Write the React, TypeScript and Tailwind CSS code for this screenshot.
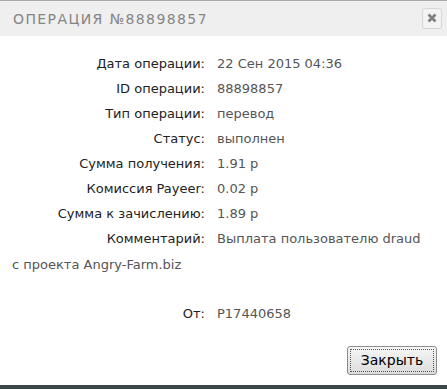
import React from "react";

const rows: [string, string][] = [
  ["Дата операции:", "22 Сен 2015 04:36"],
  ["ID операции:", "88898857"],
  ["Тип операции:", "перевод"],
  ["Статус:", "выполнен"],
  ["Сумма получения:", "1.91 р"],
  ["Комиссия Payeer:", "0.02 р"],
  ["Сумма к зачислению:", "1.89 р"],
];

export default function App() {
  return (
    <div
      className="w-[447px] h-[389px] bg-white flex flex-col overflow-hidden"
      style={{ fontFamily: '"DejaVu Sans", "Open Sans", sans-serif' }}
    >
      <div className="h-[36px] shrink-0 border-t border-[#a9a9a9] bg-[#efefef] flex items-center justify-between pl-[13px] pr-[5px]">
        <div className="text-[14px] tracking-[1.4px] text-[#858585] leading-none">ОПЕРАЦИЯ №88898857</div>
        <div className="w-[20px] h-[21px] border border-[#d6d6d6] rounded-[3px] bg-[#f3f3f3] flex items-center justify-center mb-[1px]">
          <svg width="10" height="10" viewBox="0 0 10 10">
            <path d="M1.5 1.5 L8.5 8.5 M8.5 1.5 L1.5 8.5" stroke="#808080" strokeWidth="2.8" strokeLinecap="butt" />
          </svg>
        </div>
      </div>
      <div className="flex-1 flex flex-col pt-[15px] text-[13px] leading-[25px]">
        {rows.map(([l, v]) => (
          <div key={l} className="flex">
            <div className="w-[205px] text-right text-[#222] font-medium">{l}</div>
            <div className="pl-[12px] text-[#555]">{v}</div>
          </div>
        ))}
        <div className="pl-[12px] leading-[26px]">
          <span className="inline-block w-[193px] text-right text-[#222] font-medium">Комментарий:</span>
          <span className="pl-[12px] text-[#555]">Выплата пользователю draud</span>
          <br />
          <span className="text-[#555]">с проекта Angry-Farm.biz</span>
        </div>
        <div className="flex mt-[23px]">
          <div className="w-[205px] text-right text-[#222] font-medium">От:</div>
          <div className="pl-[12px] text-[#555]">P17440658</div>
        </div>
        <div className="flex-1" />
        <div className="flex justify-end pr-[10px] pb-[10px]">
          <button className="w-[90px] h-[29px] rounded-[3px] border border-[#8d8d8d] bg-gradient-to-b from-[#f6f6f6] to-[#dcdcdc] p-[2px]">
            <div className="w-full h-full border border-dotted border-[#555] flex items-center justify-center text-[14px] text-black" style={{ fontFamily: '"DejaVu Sans", sans-serif' }}>
              Закрыть
            </div>
          </button>
        </div>
      </div>
      <div className="h-[4px] shrink-0 bg-[#3a4848]" />
    </div>
  );
}
